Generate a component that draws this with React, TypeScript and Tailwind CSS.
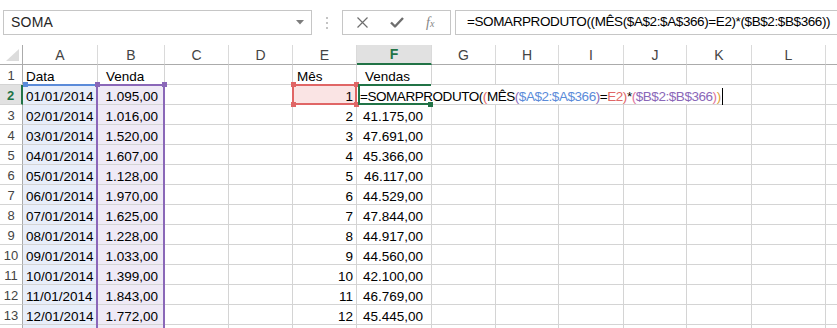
import React from "react";

const COLS = ["A", "B", "C", "D", "E", "F", "G", "H", "I", "J", "K", "L"];

const DATES = Array.from({ length: 12 }, (_, i) => `${String(i + 1).padStart(2, "0")}/01/2014`);
const VENDA = [
  "1.095,00", "1.016,00", "1.520,00", "1.607,00", "1.128,00", "1.970,00",
  "1.625,00", "1.228,00", "1.033,00", "1.399,00", "1.843,00", "1.772,00",
];
const TOTAIS = [
  "", "41.175,00", "47.691,00", "45.366,00", "46.117,00", "44.529,00",
  "47.844,00", "44.917,00", "44.560,00", "42.100,00", "46.769,00", "45.445,00",
];

const BLUE = "#5b8bd9";
const RED = "#e06666";
const PURPLE = "#8a67b8";

function Formula() {
  return (
    <>
      <span>=SOMARPRODUTO(</span>
      <span className="text-[#e06666]">(</span>
      <span>MÊS</span>
      <span className="text-[#8a67b8]">(</span>
      <span className="text-[#5b8bd9]">$A$2:$A$366</span>
      <span className="text-[#8a67b8]">)</span>
      <span>=</span>
      <span className="text-[#e06666]">E2</span>
      <span className="text-[#e06666]">)</span>
      <span>*</span>
      <span className="text-[#e0709a]">(</span>
      <span className="text-[#8a67b8]">$B$2:$B$366</span>
      <span className="text-[#e0709a]">)</span>
      <span className="text-[#d9a03a]">)</span>
    </>
  );
}

function Square({ color, className }: { color: string; className: string }) {
  return (
    <span
      className={`absolute w-[5px] h-[5px] z-30 ${className}`}
      style={{ backgroundColor: color }}
    />
  );
}

function Cell({
  children,
  className = "",
  right = false,
  extra,
}: {
  children?: React.ReactNode;
  className?: string;
  right?: boolean;
  extra?: React.ReactNode;
}) {
  return (
    <div
      className={`relative border-r border-b border-[#d4d4d4] flex items-end leading-[15px] whitespace-nowrap text-[#000] ${
        right ? "justify-end" : "justify-start"
      } ${className}`}
    >
      {children}
      {extra}
    </div>
  );
}

function DataRow({ r }: { r: number }) {
  const i = r - 2;
  const active = r === 2;
  const inData = r >= 2;

  return (
    <>
      <div
        className={`border-b border-b-[#d4d4d4] flex items-end justify-center leading-[15px] pb-[1px] text-[13px] ${
          active
            ? "bg-[#e1e1e1] text-[#217346] font-bold border-r-2 border-r-[#217346]"
            : "text-[#444] border-r border-r-[#ababab]"
        }`}
      >
        {r <= 13 ? r : ""}
      </div>

      {/* A */}
      <Cell
        className={inData ? "bg-[#e8eefa] pl-[3px]" : "pl-[3px]"}
        extra={
          r === 2 ? (
            <>
              <span className="absolute left-[1px] -right-[1px] -top-[1px] h-[2px] z-20" style={{ backgroundColor: BLUE }} />
              <Square color={BLUE} className="left-0 -top-[3px]" />
            </>
          ) : null
        }
      >
        {r === 1 ? "Data" : DATES[i] ?? ""}
      </Cell>

      {/* B */}
      <Cell
        right={r !== 1}
        className={inData ? "bg-[#efeaf6] pr-[6px]" : "pl-[8px]"}
        extra={
          inData ? (
            <>
              <span
                className={`absolute -left-[2px] -right-[1px] ${r === 2 ? "-top-[1px]" : "top-0"} -bottom-[1px] border-x-2 z-20 ${
                  r === 2 ? "border-t-2" : ""
                }`}
                style={{ borderColor: PURPLE }}
              />
              {r === 2 && (
                <>
                  <Square color={PURPLE} className="-left-[3px] -top-[3px]" />
                  <Square color={PURPLE} className="-right-[3px] -top-[3px]" />
                </>
              )}
            </>
          ) : null
        }
      >
        {r === 1 ? "Venda" : VENDA[i] ?? ""}
      </Cell>

      <Cell />
      <Cell />

      {/* E */}
      <Cell
        right={r !== 1}
        className={r === 2 ? "bg-[#fae4e4] pr-[3px]" : r === 1 ? "pl-[4px]" : "pr-[3px]"}
        extra={
          r === 2 ? (
            <>
              <span
                className="absolute -left-[1px] -right-[1px] -top-[1px] -bottom-[1px] border-2 z-20"
                style={{ borderColor: RED }}
              />
              <Square color={RED} className="-left-[2px] -top-[3px]" />
              <Square color={RED} className="-right-[3px] -top-[3px]" />
              <Square color={RED} className="-left-[2px] -bottom-[3px]" />
              <Square color={RED} className="-right-[3px] -bottom-[3px]" />
            </>
          ) : null
        }
      >
        {r === 1 ? "Mês" : inData && i < 12 ? String(i + 1) : ""}
      </Cell>

      {/* F */}
      <Cell
        right={r !== 1 && r !== 2}
        className={r === 1 ? "pl-[8px]" : "pr-[8px]"}
        extra={
          r === 2 ? (
            <>
              <span className="absolute left-[1px] right-0 -top-[1px] h-[2px] bg-[#217346] z-30" />
              <span className="absolute left-[1px] w-[2px] -top-[1px] -bottom-[1px] bg-[#217346] z-30" />
              <span className="absolute left-[1px] right-[2px] -bottom-[1px] h-[2px] bg-[#217346] z-30" />
              <Square color="#217346" className="-right-[2px] -bottom-[3px]" />
              <span className="absolute left-[3px] top-0 bottom-0 bg-white z-10 flex items-end leading-[15px] tracking-[-0.45px] pr-[1px]">
                <Formula />
                <span className="inline-block w-[1px] h-[17px] bg-black ml-[1px] mb-[-1px]" />
              </span>
            </>
          ) : null
        }
      >
        {r === 1 ? "Vendas" : r >= 3 ? TOTAIS[i] ?? "" : ""}
      </Cell>

      {COLS.slice(6).map((c) => (
        <Cell key={c} />
      ))}
      <div className="border-b border-[#d4d4d4]" />
    </>
  );
}

export default function App() {
  return (
    <div className="w-[837px] h-[328px] overflow-hidden bg-white font-['Liberation_Sans',Arial,sans-serif] text-[13.5px]">
      {/* name box + formula bar */}
      <div className="h-[45px] flex items-start pt-[10px]">
        <div className="shrink-0 ml-[3px] w-[309px] h-[25px] border border-[#c6c6c6] flex items-center justify-between pl-[7px] pr-[7px]">
          <span className="text-[14px] text-[#262626] tracking-[0.2px]">SOMA</span>
          <svg width="8" height="5" viewBox="0 0 8 5">
            <path d="M0 0h8L4 4.5z" fill="#7d7d7d" />
          </svg>
        </div>
        <div className="shrink-0 w-[30px] h-[25px] flex flex-col items-center justify-center gap-[3px]">
          <span className="w-[2px] h-[2px] bg-[#c4c4c4]" />
          <span className="w-[2px] h-[2px] bg-[#c4c4c4]" />
          <span className="w-[2px] h-[2px] bg-[#c4c4c4]" />
        </div>
        <div className="shrink-0 w-[109px] h-[25px] border border-[#c6c6c6] flex items-center pl-[14px] gap-[22px]">
          <svg width="11" height="11" viewBox="0 0 11 11">
            <path d="M0.5 0.5L10.5 10.5M10.5 0.5L0.5 10.5" stroke="#6e6e6e" strokeWidth="1.2" fill="none" />
          </svg>
          <svg width="14" height="11" viewBox="0 0 14 11">
            <path d="M1 5.5L5 9.5L13 1" stroke="#6e6e6e" strokeWidth="2.4" fill="none" strokeLinejoin="round" />
          </svg>
          <span className="font-['Liberation_Serif',serif] italic text-[14px] text-[#858585] leading-none">
            f<span className="text-[10px]">x</span>
          </span>
        </div>
        <div className="ml-[4px] flex-1 min-w-0 overflow-hidden h-[25px] border border-r-0 border-[#c6c6c6] flex items-center pl-[11px] text-[13.5px] tracking-[-0.4px] text-black whitespace-nowrap">
          =SOMARPRODUTO((MÊS($A$2:$A$366)=E2)*($B$2:$B$366))
        </div>
      </div>

      {/* grid */}
      <div className="grid grid-cols-[23px_75px_67px_64px_64px_64px_75px_64px_63px_65px_63px_65px_74px_minmax(0,1fr)] auto-rows-[20px]">
        <div className="relative border-r border-b border-r-[#ababab] border-b-[#ababab]">
          <svg className="absolute right-[3px] bottom-[3px]" width="13" height="12" viewBox="0 0 13 12">
            <path d="M13 0V12H0z" fill="#dcdcdc" />
          </svg>
        </div>
        {COLS.map((c) => (
          <div
            key={c}
            className={`flex items-end justify-center leading-[15px] pb-[1px] text-[14px] border-r border-r-[#dadada] ${
              c === "F"
                ? "bg-[#e1e1e1] text-[#217346] font-bold border-b-2 border-b-[#217346]"
                : "text-[#444] border-b border-b-[#ababab]"
            }`}
          >
            {c}
          </div>
        ))}
        <div className="border-b border-b-[#ababab]" />

        {Array.from({ length: 14 }, (_, k) => (
          <DataRow key={k} r={k + 1} />
        ))}
      </div>
    </div>
  );
}
